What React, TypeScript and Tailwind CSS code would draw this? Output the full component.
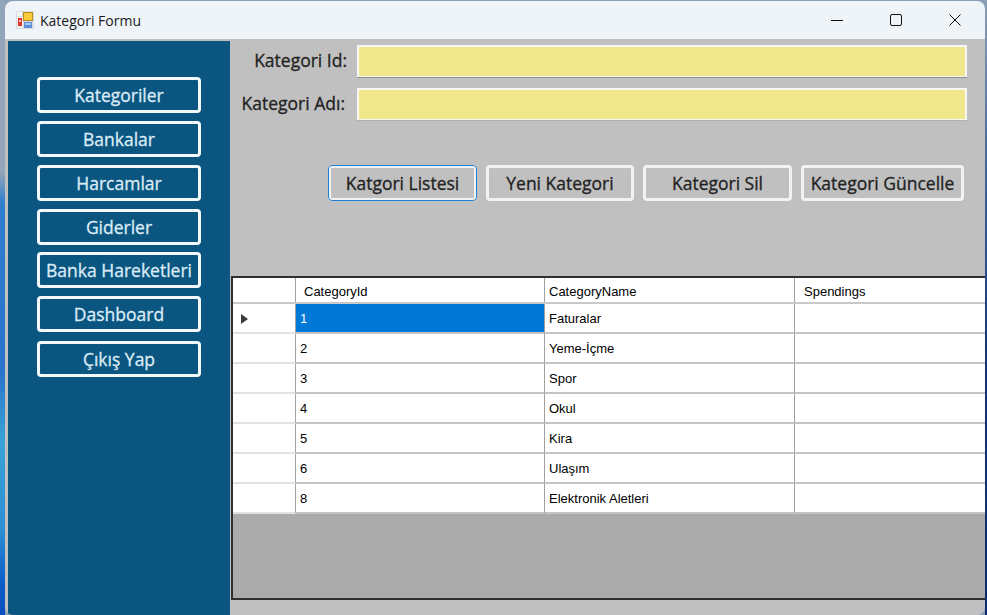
const menuItems = [
  { label: "Kategoriler", offset: "" },
  { label: "Bankalar", offset: "" },
  { label: "Harcamlar", offset: "" },
  { label: "Giderler", offset: "" },
  { label: "Banka Hareketleri", offset: "-mt-px" },
  { label: "Dashboard", offset: "" },
  { label: "Çıkış Yap", offset: "mt-px" },
];

const actions = [
  { label: "Katgori Listesi", width: "w-[149px]", focused: true },
  { label: "Yeni Kategori", width: "w-[148px]", focused: false },
  { label: "Kategori Sil", width: "w-[149px]", focused: false },
  { label: "Kategori Güncelle", width: "w-[163px]", focused: false },
];

const rows = [
  { id: "1", name: "Faturalar" },
  { id: "2", name: "Yeme-İçme" },
  { id: "3", name: "Spor" },
  { id: "4", name: "Okul" },
  { id: "5", name: "Kira" },
  { id: "6", name: "Ulaşım" },
  { id: "8", name: "Elektronik Aletleri" },
];

const rowCols = "grid grid-cols-[63px_249px_250px_1fr]";
const cellText = "font-['Liberation_Sans',sans-serif] text-[13px] text-black";
const buttonText = "font-['Open_Sans',sans-serif] text-[17.5px] [-webkit-text-stroke:0.3px] whitespace-nowrap";

function AppIcon() {
  return (
    <svg width="18" height="18" viewBox="0 0 18 18" className="shrink-0">
      <rect x="0" y="0" width="18" height="18" fill="#d9dde2" />
      <rect x="1" y="1" width="5" height="4" fill="#f6f6f6" />
      <rect x="1" y="6" width="6" height="11" fill="#ececec" />
      <rect x="2" y="7" width="4" height="8" fill="#d8352e" />
      <rect x="3" y="9" width="2" height="2" fill="#f7c0b8" />
      <rect x="7" y="1" width="10" height="9" fill="#b88a1c" />
      <rect x="8" y="2" width="8" height="7" fill="#f5cb3c" />
      <rect x="8" y="11" width="8" height="6" fill="#5b8fd8" />
      <rect x="9" y="12" width="6" height="2" fill="#a5c6ee" />
    </svg>
  );
}

function TitleBar() {
  return (
    <div className="flex h-[38px] shrink-0 items-center bg-[#eff4f9] pl-[11px]">
      <AppIcon />
      <span className="ml-[6px] font-['Open_Sans',sans-serif] text-[14px] text-[#1a1a1a]">Kategori Formu</span>
      <div className="mr-px ml-auto flex items-center">
        <div className="flex h-[38px] w-[59px] items-center justify-center">
          <svg width="12" height="12" viewBox="0 0 12 12">
            <path d="M0 6.5h12" stroke="#111" strokeWidth="1" />
          </svg>
        </div>
        <div className="flex h-[38px] w-[59px] items-center justify-center">
          <svg width="12" height="12" viewBox="0 0 12 12" fill="none">
            <rect x="0.5" y="0.5" width="11" height="11" rx="1.5" stroke="#111" strokeWidth="1" />
          </svg>
        </div>
        <div className="flex h-[38px] w-[59px] items-center justify-center">
          <svg width="12" height="12" viewBox="0 0 12 12">
            <path d="M0.5 0.5l11 11M11.5 0.5l-11 11" stroke="#111" strokeWidth="1" />
          </svg>
        </div>
      </div>
    </div>
  );
}

function Sidebar() {
  return (
    <aside className="flex w-[222px] shrink-0 flex-col gap-2 bg-[#0b5680] pl-[29px] pt-9">
      {menuItems.map((item) => (
        <button
          key={item.label}
          className={`flex h-9 w-[164px] items-center justify-center rounded-[4px] border-[3px] border-[#f4f8fb] text-[#dcecf7] ${buttonText} ${item.offset}`}
        >
          {item.label}
        </button>
      ))}
    </aside>
  );
}

function Field({ label, className, labelClass, inputClass }: { label: string; className: string; labelClass: string; inputClass: string }) {
  return (
    <div className={`flex items-center ${className}`}>
      <label className={`flex w-[116px] justify-end text-[#222] ${buttonText} ${labelClass}`}>{label}</label>
      <div className={`ml-[10px] h-[32px] w-[610px] border-2 border-b border-[#f7f7f7] bg-[#f0e68c] ${inputClass}`} />
    </div>
  );
}

function DataGrid() {
  return (
    <div className="mt-[75px] flex h-[324px] flex-col border-2 border-r-0 border-[#2f2f2f] bg-[#ababab]">
      <div className={`${rowCols} h-[26px] border-b-2 border-[#c9c9c9] bg-white`}>
        <div className="border-r border-[#a0a0a0]" />
        <div className={`flex items-center border-r border-[#a0a0a0] pt-[3px] pl-2 ${cellText}`}>CategoryId</div>
        <div className={`flex items-center border-r border-[#a0a0a0] pt-[3px] pl-1 ${cellText}`}>CategoryName</div>
        <div className={`flex items-center pt-[3px] pl-[9px] ${cellText}`}>Spendings</div>
      </div>
      {rows.map((row, i) => (
        <div key={row.id} className={`${rowCols} h-[30px] bg-white`}>
          <div className="flex items-center border-r border-b-2 border-[#a0a0a0] border-b-[#e2e2e2] pt-[2px] pl-[8px]">
            {i === 0 && (
              <svg width="7" height="10" viewBox="0 0 7 10">
                <path d="M0 0l7 5-7 5z" fill="#3a3a3a" />
              </svg>
            )}
          </div>
          <div className={`flex items-center border-r border-b-2 border-[#a0a0a0] border-b-[#c4c4c4] pt-[2px] pl-1 ${cellText} ${i === 0 ? "bg-[#0078d7] text-white" : ""}`}>
            {row.id}
          </div>
          <div className={`flex items-center border-r border-b-2 border-[#a0a0a0] border-b-[#c4c4c4] pt-[2px] pl-1 ${cellText}`}>{row.name}</div>
          <div className="border-b-2 border-[#c4c4c4]" />
        </div>
      ))}
    </div>
  );
}

export default function App() {
  return (
    <div className="flex h-[615px] w-[987px] overflow-hidden bg-[#8ba0b6]">
      <div className="h-full w-[5px] shrink-0 bg-[linear-gradient(180deg,#93a5b8_0%,#93a5b8_28%,#2f7fcf_33%,#2a72cc_60%,#38a4d6_72%,#2c8ed4_86%,#0a5cc8_95%,#0a4fc0_100%)]" />
      <div className="mt-px flex h-[614px] w-[980px] shrink-0 flex-col overflow-hidden rounded-lg">
        <TitleBar />
        <div className="flex min-h-0 flex-1 bg-[#c0c0c0] pt-[2px] pl-[3px]">
          <Sidebar />
          <main className="flex-1 pl-px">
            <Field label="Kategori Id:" className="pt-1" labelClass="pb-[2px]" inputClass="shadow-[0_1px_0_#8f8f8f]" />
            <Field label="Kategori Adı:" className="mt-[11px]" labelClass="pr-[2px] pb-[2px]" inputClass="shadow-[0_1px_0_#b0b0b0]" />
            <div className="mt-[45px] ml-[97px] flex gap-[9px]">
              {actions.map((a) => (
                <button
                  key={a.label}
                  className={`flex h-9 items-center justify-center rounded-[4px] border-[3px] border-[#f2f2f2] text-[#222] ${buttonText} ${a.width} ${
                    a.focused ? "outline outline-1 -outline-offset-1 outline-[#1e7fd6]" : ""
                  }`}
                >
                  {a.label}
                </button>
              ))}
            </div>
            <DataGrid />
          </main>
        </div>
      </div>
      <div className="h-full w-[2px] shrink-0 bg-[linear-gradient(180deg,#8ba0b6_0%,#3a5f9a_30%,#12307f_60%,#0a2a78_100%)]" />
    </div>
  );
}
